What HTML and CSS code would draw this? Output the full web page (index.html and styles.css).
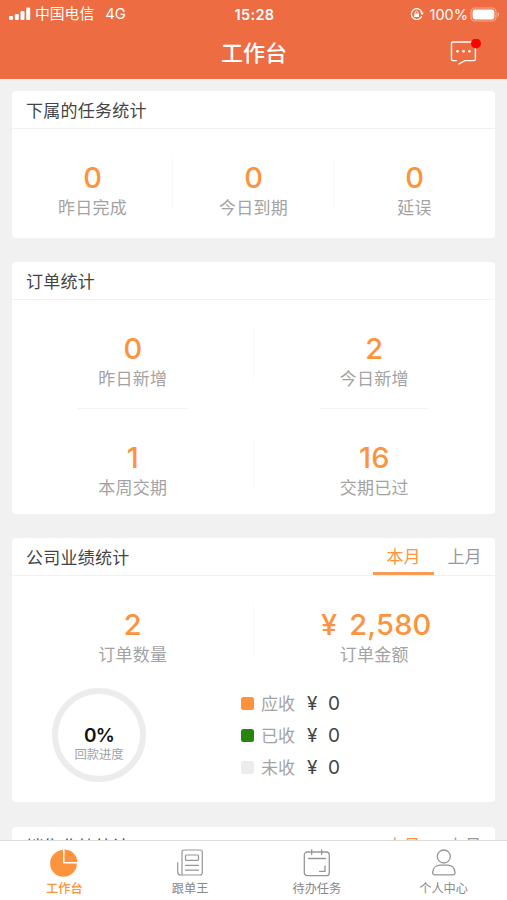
FILE: index.html
```html
<!DOCTYPE html>
<html lang="zh-CN">
<head>
<meta charset="utf-8">
<title>工作台</title>
<link rel="stylesheet" href="styles.css">
</head>
<body>
<div class="app">
  <header class="header">
    <div class="status">
      <div class="status-left">
        <svg class="signal" width="22" height="14" viewBox="0 0 22 14" fill="#fff"><rect x="0" y="9" width="4" height="4" rx="1.2"/><rect x="5.8" y="7" width="4" height="6" rx="1.2"/><rect x="11.5" y="4" width="4" height="9" rx="1.2"/><rect x="17.2" y="0.5" width="4" height="12.5" rx="1.2"/></svg>
        <span class="carrier">中国电信</span>
        <span class="network">4G</span>
      </div>
      <div class="time">15:28</div>
      <div class="status-right">
        <svg width="14" height="14" viewBox="0 0 14 14" fill="none" stroke="#fff"><path d="M11.8 5.2A5.4 5.4 0 1 0 11.7 9.2" stroke-width="1.2"/><path d="M10.2 5.4h3.6l-1.7 2.8z" fill="#fff" stroke="none"/><rect x="4.2" y="6.5" width="4.8" height="3.6" rx=".6" fill="#fff" stroke="none"/><path d="M5.2 6.7V5.5a1.4 1.4 0 0 1 2.8 0v1.2" stroke-width=".9"/></svg>
        <span class="percent">100%</span>
        <svg width="30" height="15" viewBox="0 0 30 15"><rect x="1" y="1" width="25" height="13" rx="4" fill="none" stroke="#f5ab8f" stroke-width="1.2"/><rect x="2.6" y="2.6" width="21.8" height="9.8" rx="2.4" fill="#fff"/><path d="M27.500 5v5q1.800-.8 1.800-2.500T27.500 5z" fill="#f5ab8f"/></svg>
      </div>
    </div>
    <div class="titlebar">
      <h1 class="title">工作台</h1>
      <svg class="message" width="32" height="28" viewBox="0 0 32 28" fill="none" stroke="#fff" stroke-width="1.4" stroke-linecap="round" stroke-linejoin="round"><path d="M6.500 21.600H3.200Q1.500 21.600 1.500 19.900V4.700Q1.500 3 3.200 3H23.700Q25.400 3 25.400 4.700V19.900Q25.400 21.600 23.700 21.600H15L8.800 25"/><g fill="#fff" stroke="none"><circle cx="7.500" cy="12.300" r="1.350"/><circle cx="13.500" cy="12.300" r="1.350"/><circle cx="19.500" cy="12.300" r="1.350"/></g><circle cx="26" cy="4.500" r="5" fill="#f90405" stroke="none"/></svg>
    </div>
  </header>

  <main class="content">
    <section class="card">
      <div class="card-head"><h2>下属的任务统计</h2></div>
      <div class="stats three">
        <div class="stat"><b>0</b><span>昨日完成</span></div>
        <div class="stat"><b>0</b><span>今日到期</span></div>
        <div class="stat"><b>0</b><span>延误</span></div>
      </div>
    </section>

    <section class="card">
      <div class="card-head"><h2>订单统计</h2></div>
      <div class="stats two">
        <div class="stat lined"><b>0</b><span>昨日新增</span></div>
        <div class="stat lined"><b>2</b><span>今日新增</span></div>
        <div class="stat"><b>1</b><span>本周交期</span></div>
        <div class="stat"><b>16</b><span>交期已过</span></div>
      </div>
    </section>

    <section class="card">
      <div class="card-head"><h2>公司业绩统计</h2>
        <nav class="tabs"><span class="tab active">本月</span><span class="tab">上月</span></nav>
      </div>
      <div class="stats two">
        <div class="stat"><b>2</b><span>订单数量</span></div>
        <div class="stat"><b class="amount"><i>¥</i>2,580</b><span>订单金额</span></div>
      </div>
      <div class="payment">
        <div class="ring"><strong>0%</strong><span>回款进度</span></div>
        <ul class="legend">
          <li><i class="swatch orange"></i><span>应收</span><em>¥</em><em>0</em></li>
          <li><i class="swatch green"></i><span>已收</span><em>¥</em><em>0</em></li>
          <li><i class="swatch gray"></i><span>未收</span><em>¥</em><em>0</em></li>
        </ul>
      </div>
    </section>

    <section class="card">
      <div class="card-head"><h2>销售业绩统计</h2>
        <nav class="tabs"><span class="tab active">本月</span><span class="tab">上月</span></nav>
      </div>
    </section>
  </main>

  <nav class="tabbar">
    <a class="item current">
      <svg width="30" height="30" viewBox="0 0 30 30" fill="#fd933c"><path d="M14 2A13.400 13.400 0 1 0 27.900 15.500H14z"/><path d="M15.500 1.500A12.900 12.900 0 0 1 28.400 14H15.500z"/></svg>
      <span>工作台</span>
    </a>
    <a class="item">
      <svg width="30" height="30" viewBox="0 0 30 30" fill="none" stroke="#969696" stroke-width="1.200" stroke-linecap="round"><path d="M7 27V4Q7 2 9 2H25.300Q27.300 2 27.300 4V24.500Q27.300 27 24.800 27H5.500Q2.700 27 2.700 24V14.500"/><rect x="10.500" y="7" width="13" height="5.300" rx=".8"/><path d="M10.500 17.300h13M10.500 22.200h13"/></svg>
      <span>跟单王</span>
    </a>
    <a class="item">
      <svg width="30" height="30" viewBox="0 0 30 30" fill="none" stroke="#969696" stroke-width="1.300" stroke-linecap="round"><rect x="2.300" y="4" width="25" height="23.700" rx="3"/><path d="M9.700 1.800v4.700M19.700 1.800v4.700M6.500 10.500h17M23 18v5.300h-5.500"/></svg>
      <span>待办任务</span>
    </a>
    <a class="item">
      <svg width="30" height="30" viewBox="0 0 30 30" fill="none" stroke="#969696" stroke-width="1.300"><circle cx="14.800" cy="8.500" r="6.500"/><path d="M6 26.800Q3.400 26.800 3.700 24.200C4.200 19.500 7.500 17.200 11 17.200H18.500C22.200 17.200 25.500 19.500 26 24.200Q26.300 26.800 23.700 26.800z"/></svg>
      <span>个人中心</span>
    </a>
  </nav>
</div>
</body>
</html>
```
FILE: styles.css
```css
* { box-sizing: border-box; margin: 0; padding: 0; }
body {
  font-family: Inter, "Noto Sans CJK SC", sans-serif;
  background: #f1f1f1;
  color: #444;
}
.app { height: 900px; display: flex; flex-direction: column; overflow: hidden; }

.header { flex: none; height: 79px; background: #ed6c42; color: #fff; }
.status {
  height: 27px;
  padding: 0 7px 0 9px;
  display: grid;
  grid-template-columns: 1fr auto 1fr;
  align-items: center;
  font-size: 14px;
  line-height: 27px;
}
.status-left, .status-right { display: flex; align-items: center; }
.status-right { justify-content: flex-end; }
.carrier { margin-left: 4px; font-size: 14.8px; padding-top: 1px; }
.network { margin-left: 11px; font-size: 14.8px; }
.time { font-size: 14.5px; font-weight: 600; letter-spacing: .35px; }
.percent { margin: 0 2px 0 6px; font-size: 14.5px; }
.titlebar {
  height: 52px;
  display: grid;
  grid-template-columns: 1fr auto 1fr;
  align-items: center;
  padding: 0 25px 1px 26px;
}
.title { grid-column: 2; font-size: 22px; line-height: 32px; font-weight: 500; }
.message { justify-self: end; }

.content {
  flex: 1;
  min-height: 0;
  overflow: hidden;
  padding: 12px 12px 0;
  display: flex;
  flex-direction: column;
  gap: 24px;
}
.card { flex: none; background: #fff; border-radius: 4px; }
.card:last-child { margin-top: 1px; }
.card-head {
  height: 38px;
  padding: 0 0 0 14px;
  display: flex;
  justify-content: space-between;
  border-bottom: 1px solid #f1f1f1;
}
.card-head h2 { font-size: 17px; font-weight: 400; letter-spacing: .25px; line-height: 40px; }
.tabs { display: flex; }
.tab { width: 61px; height: 37px; text-align: center; font-size: 17px; line-height: 39px; color: #999; }
.tab.active { color: #fd933c; border-bottom: 3px solid #fa9b55; }

.stats { display: grid; }
.three { grid-template-columns: repeat(3, 1fr); }
.two { grid-template-columns: repeat(2, 1fr); }
.stat {
  height: 109px;
  padding-top: 32px;
  display: flex;
  flex-direction: column;
  align-items: center;
  background: linear-gradient(#f9f9f9, #f9f9f9) right 28px / 1px 52px no-repeat;
}
.three .stat:last-child, .two .stat:nth-child(even) { background: none; }
.stat b { font-size: 29px; line-height: 34px; font-weight: 500; color: #fd933c; }
.stat b i { font-style: normal; margin-right: 12px; }
.stat .amount { letter-spacing: .2px; padding-left: 4px; }
.stat span { font-size: 17px; line-height: 24px; letter-spacing: .25px; margin-top: 1px; color: #a3a3a3; }
.lined::after { content: ""; width: 109px; height: 1px; margin-top: 17px; background: #f3f3f3; }
.two .stat:nth-child(n+3) { height: 105px; }

.payment { height: 117px; display: flex; padding-left: 40px; }
.ring {
  width: 94px;
  height: 94px;
  margin-top: 3px;
  border: 6px solid #ececec;
  border-radius: 50%;
  display: flex;
  flex-direction: column;
  align-items: center;
  padding-top: 31px;
}
.ring strong { font-size: 19px; line-height: 22px; font-weight: 600; color: #111; letter-spacing: -.8px; }
.ring span { font-size: 12.3px; line-height: 16px; color: #a3a3a3; white-space: nowrap; }
.legend { list-style: none; margin: 2px 0 0 95px; }
.legend li { height: 32px; display: flex; align-items: center; font-size: 17px; line-height: 32px; }
.legend span { width: 45px; color: #a3a3a3; padding-top: 1px; }
.legend em { font-style: normal; font-size: 19px; width: 21px; padding-top: 2px; margin-left: 1px; margin-right: -1px; }
.swatch { width: 13px; height: 13px; border-radius: 2.5px; margin-right: 7px; }
.orange { background: #fd933c; }
.green { background: #2a820f; }
.gray { background: #ececec; }

.tabbar {
  flex: none;
  height: 60px;
  display: grid;
  grid-template-columns: repeat(4, 1fr);
  border-top: 1px solid #dcdcdc;
  background: #fff;
}
.item {
  display: flex;
  flex-direction: column;
  align-items: center;
  padding-top: 7px;
  font-size: 12.2px;
  line-height: 18px;
  color: #888;
}
.item span { margin-top: 2px; }
.item.current { color: #fd933c; font-weight: 500; padding-left: 2px; }
```
